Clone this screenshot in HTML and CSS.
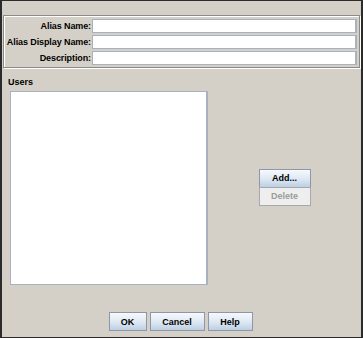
FILE: index.html
```html
<!DOCTYPE html>
<html lang="en">
<head>
  <meta charset="UTF-8" />
  <title>Alias</title>
  <link rel="stylesheet" href="styles.css">
</head>
<body>
  <div class="dialog">
    <div class="fields">
      <label for="aliasName">Alias Name:</label>
      <input type="text" id="aliasName">
      <label for="aliasDisplay">Alias Display Name:</label>
      <input type="text" id="aliasDisplay">
      <label for="description">Description:</label>
      <input type="text" id="description">
    </div>

    <div class="users">
      <div class="users-title">Users</div>
      <div class="users-row">
        <div class="user-list"></div>
        <div class="list-actions">
          <button class="btn">Add...</button>
          <button class="btn" disabled>Delete</button>
        </div>
      </div>
    </div>

    <div class="footer">
      <button class="btn btn-ok">OK</button>
      <button class="btn btn-cancel">Cancel</button>
      <button class="btn btn-help">Help</button>
    </div>
  </div>
</body>
</html>
```

FILE: styles.css
```css
body {
  margin: 0;
  font-family: 'Liberation Sans', Arial, sans-serif;
  font-size: 9px;
  font-weight: bold;
  color: #000;
}

.dialog {
  width: 363px;
  height: 338px;
  box-sizing: border-box;
  background: #d4d0c8;
  border-top: 1px solid #2b2b2b;
  border-left: 2px solid #2b2b2b;
  border-right: 2px solid #2b2b2b;
  border-bottom: 1px solid #2b2b2b;
  display: flex;
  flex-direction: column;
}

/* etched panel at the top */
.fields {
  margin: 14px 1px 0 1px;
  border: 1px solid #8c8a85;
  box-shadow: inset 1px 1px 0 #fff, 1px 1px 0 #fff;
  padding: 3px 2px 2px 0;
  display: grid;
  grid-template-columns: 87px 1fr;
  column-gap: 1px;
  row-gap: 2px;
  align-items: center;
}

.fields label {
  text-align: right;
  white-space: nowrap;
  letter-spacing: -0.1px;
}

.fields input {
  height: 14px;
  box-sizing: border-box;
  margin: 0;
  padding: 0 2px;
  border: 1px solid #a7b1bf;
  border-right-width: 2px;
  background: #fff;
  font: inherit;
}

.users {
  padding: 0 0 0 6px;
}

.users-title {
  margin-top: 8px;
  height: 12px;
  line-height: 12px;
}

.users-row {
  display: flex;
  margin-top: 3px;
}

.user-list {
  width: 198px;
  height: 194px;
  box-sizing: border-box;
  margin-left: 2px;
  background: #fff;
  border: 1px solid #a7b1bf;
  border-right-width: 2px;
}

.list-actions {
  flex: 1;
  display: flex;
  flex-direction: column;
  justify-content: center;
  align-items: center;
  padding-bottom: 2px;
}

.btn {
  box-sizing: border-box;
  height: 19px;
  padding: 0;
  margin: 0;
  border: 1px solid #8d97a5;
  background: linear-gradient(#f6f9fc, #dde7f2 55%, #bccfe4);
  font: inherit;
  color: #000;
}

.list-actions .btn {
  width: 52px;
}

.list-actions .btn + .btn {
  margin-top: -1px;
}

.btn:disabled {
  background: #eeeeee;
  color: #9a9a9a;
  border-color: #a8a8a8;
}

.footer {
  margin-top: auto;
  margin-bottom: 6px;
  display: flex;
  justify-content: center;
  gap: 3px;
  padding-right: 2px;
}

.btn-ok {
  width: 38px;
}

.btn-cancel {
  width: 55px;
}

.btn-help {
  width: 45px;
}
```
